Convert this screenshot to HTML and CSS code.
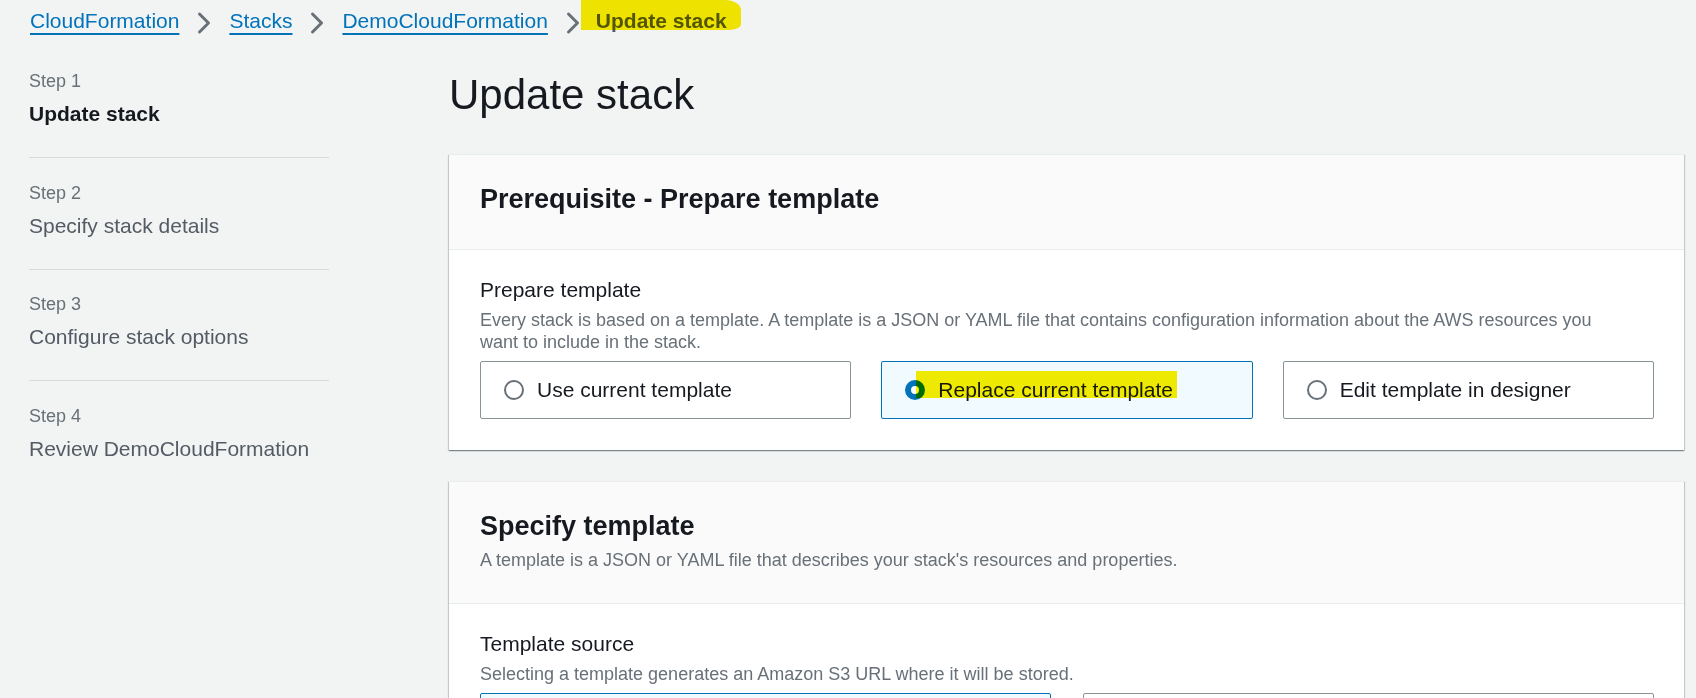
FILE: index.html
```html
<!DOCTYPE html>
<html lang="en">
<head>
<meta charset="utf-8">
<title>Update stack</title>
<link rel="stylesheet" href="styles.css">
</head>
<body>
<div class="page">
  <nav class="crumbs">
    <a class="crumb-link" href="#">CloudFormation</a>
    <svg class="chev" viewBox="0 0 16 16"><path d="M5 2l6 6-6 6"/></svg>
    <a class="crumb-link" href="#">Stacks</a>
    <svg class="chev" viewBox="0 0 16 16"><path d="M5 2l6 6-6 6"/></svg>
    <a class="crumb-link" href="#">DemoCloudFormation</a>
    <svg class="chev" viewBox="0 0 16 16"><path d="M5 2l6 6-6 6"/></svg>
    <span class="crumb-current">Update stack</span>
  </nav>

  <div class="layout">
    <aside class="steps">
      <div class="step">
        <div class="step-label">Step 1</div>
        <div class="step-title active">Update stack</div>
      </div>
      <div class="step">
        <div class="step-label">Step 2</div>
        <div class="step-title">Specify stack details</div>
      </div>
      <div class="step">
        <div class="step-label">Step 3</div>
        <div class="step-title">Configure stack options</div>
      </div>
      <div class="step">
        <div class="step-label">Step 4</div>
        <div class="step-title">Review DemoCloudFormation</div>
      </div>
    </aside>

    <main class="main">
      <h1 class="page-title">Update stack</h1>

      <section class="card">
        <div class="card-header">
          <h2 class="card-title">Prerequisite - Prepare template</h2>
        </div>
        <div class="card-body">
          <div class="field-label">Prepare template</div>
          <div class="field-desc field-desc-wrap">Every stack is based on a template. A template is a JSON or YAML file that contains configuration information about the AWS resources you want to include in the stack.</div>
          <div class="tiles tiles-3">
            <label class="tile"><span class="radio"></span><span class="tile-text">Use current template</span></label>
            <label class="tile selected"><span class="radio checked"></span><span class="tile-text marked">Replace current template</span></label>
            <label class="tile"><span class="radio"></span><span class="tile-text">Edit template in designer</span></label>
          </div>
        </div>
      </section>

      <section class="card">
        <div class="card-header">
          <h2 class="card-title">Specify template</h2>
          <div class="card-desc">A template is a JSON or YAML file that describes your stack's resources and properties.</div>
        </div>
        <div class="card-body">
          <div class="field-label">Template source</div>
          <div class="field-desc">Selecting a template generates an Amazon S3 URL where it will be stored.</div>
          <div class="tiles tiles-2">
            <div class="tile selected"><span class="radio checked"></span></div>
            <div class="tile"><span class="radio"></span></div>
          </div>
        </div>
      </section>
    </main>
  </div>
</div>
</body>
</html>
```

FILE: styles.css
```css
* {
  box-sizing: border-box;
}

html,
body {
  margin: 0;
  padding: 0;
  overflow: hidden;
}

body {
  background: #f2f3f3;
  font-family: "Liberation Sans", Arial, sans-serif;
  color: #16191f;
}

/* Breadcrumbs */
.crumbs {
  display: flex;
  align-items: flex-start;
  gap: 13px;
  height: 68px;
  padding: 6px 0 0 30px;
  font-size: 21px;
  line-height: 30px;
}

.crumb-link {
  color: #0073bb;
  text-decoration: underline;
  text-decoration-thickness: 2px;
  text-underline-offset: 5px;
}

.chev {
  flex: none;
  width: 24px;
  height: 24px;
  margin-top: 5px;
  fill: none;
  stroke: #687078;
  stroke-width: 2;
  stroke-linecap: round;
  stroke-linejoin: round;
}

.crumb-current {
  position: relative;
  font-weight: 700;
  color: #545b64;
  margin-left: -2px;
}

.crumb-current::after {
  content: "";
  position: absolute;
  left: -15px;
  right: -14px;
  top: -6px;
  bottom: 6px;
  background: #fbee00;
  mix-blend-mode: multiply;
  border-radius: 0 16px 12px 0 / 0 10px 6px 0;
}

/* Layout */
.layout {
  display: grid;
  grid-template-columns: 300px 1fr;
  column-gap: 120px;
  padding: 0 12px 0 29px;
}

/* Steps */
.step {
  padding: 21.5px 0 28px;
  border-bottom: 1px solid #d5dbdb;
}

.step:first-child {
  padding-top: 0;
}

.step:last-child {
  border-bottom: none;
}

.step-label {
  font-size: 18px;
  line-height: 27px;
  color: #687078;
}

.step-title {
  margin-top: 4px;
  font-size: 21px;
  line-height: 30px;
  color: #545b64;
}

.step-title.active {
  font-weight: 700;
  color: #16191f;
}

/* Main */
.page-title {
  margin: 2px 0 34px;
  font-size: 42px;
  line-height: 50px;
  font-weight: 400;
  color: #16191f;
}

.card {
  background: #fff;
  border-top: 1px solid #eaeded;
  box-shadow: 0 1px 1px 0 rgba(0, 28, 36, 0.3),
    1px 1px 1px 0 rgba(0, 28, 36, 0.15),
    -1px 1px 1px 0 rgba(0, 28, 36, 0.15);
  margin-bottom: 31px;
}

.card-header {
  background: #fafafa;
  padding: 26px 31px 32px;
  border-bottom: 1px solid #eaeded;
}

.card-title {
  margin: 0;
  font-size: 27px;
  line-height: 36px;
  font-weight: 700;
  color: #16191f;
}

.card-desc {
  margin-top: 5px;
  font-size: 18px;
  line-height: 22px;
  color: #687078;
}

.card-body {
  padding: 25px 30px 31px 31px;
}

.field-label {
  font-size: 21px;
  line-height: 30px;
  color: #16191f;
}

.field-desc {
  margin-top: 4px;
  font-size: 18px;
  line-height: 22px;
  color: #687078;
}

.field-desc-wrap {
  max-width: 1140px;
}

.tiles {
  display: grid;
  margin-top: 8px;
}

.tiles-3 {
  grid-template-columns: repeat(3, 1fr);
  column-gap: 30px;
}

.tiles-2 {
  grid-template-columns: repeat(2, 1fr);
  column-gap: 32px;
}

.tile {
  display: flex;
  align-items: center;
  height: 58px;
  padding: 0 23px;
  border: 1px solid #879596;
  border-radius: 2px;
  background: #fff;
  font-size: 21px;
  line-height: 30px;
  color: #16191f;
}

.tile.selected {
  border-color: #0073bb;
  background: #f1faff;
}

.radio {
  flex: none;
  width: 20px;
  height: 20px;
  margin-right: 13px;
  border: 2px solid #687078;
  border-radius: 50%;
  background: #fff;
}

.radio.checked {
  border: 6px solid #0073bb;
}

.tile-text {
  white-space: nowrap;
}

.marked {
  position: relative;
}

.marked::after {
  content: "";
  position: absolute;
  left: -22px;
  right: -4px;
  top: -4px;
  bottom: 7px;
  background: #fbee00;
  mix-blend-mode: multiply;
}
```
